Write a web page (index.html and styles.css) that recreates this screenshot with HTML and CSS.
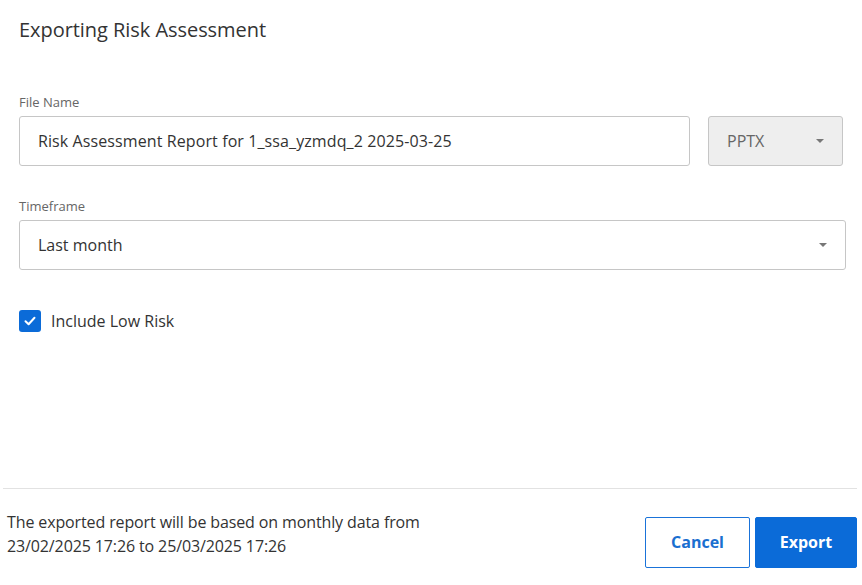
FILE: index.html
```html
<!DOCTYPE html>
<html>
<head>
<meta charset="utf-8">
<link rel="stylesheet" href="styles.css">
</head>
<body>
<div class="dialog">
  <h1 class="title">Exporting Risk Assessment</h1>
  <div class="content">
    <div class="field">
      <label class="label">File Name</label>
      <div class="row">
        <div class="input">Risk Assessment Report for 1_ssa_yzmdq_2 2025-03-25</div>
        <div class="select disabled"><span>PPTX</span><span class="caret"></span></div>
      </div>
    </div>
    <div class="field timeframe">
      <label class="label">Timeframe</label>
      <div class="select wide"><span>Last month</span><span class="caret"></span></div>
    </div>
    <div class="check">
      <span class="box"><svg width="14" height="14" viewBox="0 0 14 14"><path d="M2.5 7.2 L5.6 10.2 L11.5 3.8" fill="none" stroke="#fff" stroke-width="2" stroke-linecap="round" stroke-linejoin="round"/></svg></span>
      <span class="check-label">Include Low Risk</span>
    </div>
  </div>
  <div class="footer">
    <p class="note">The exported report will be based on monthly data from<br>23/02/2025 17:26 to 25/03/2025 17:26</p>
    <div class="actions">
      <button class="btn btn-secondary">Cancel</button>
      <button class="btn btn-primary">Export</button>
    </div>
  </div>
</div>
</body>
</html>
```

FILE: styles.css
```css
* { box-sizing: border-box; }
html, body {
  margin: 0;
  padding: 0;
  background: #fff;
}
body {
  font-family: "Open Sans", "Noto Sans", sans-serif;
  color: #333;
}
.dialog {
  width: 862px;
  height: 585px;
  display: flex;
  flex-direction: column;
}
.title {
  margin: 16px 0 0 19px;
  font-size: 20px;
  font-weight: 400;
  line-height: 27px;
  color: #333;
  letter-spacing: -0.05px;
}
.content {
  flex: 1;
  padding: 50px 16px 0 19px;
}
.field {
  display: flex;
  flex-direction: column;
}
.label {
  font-size: 13px;
  line-height: 18px;
  color: #666;
  margin-bottom: 5px;
}
.row {
  display: flex;
  gap: 18px;
}
.input {
  flex: 0 0 671px;
  height: 50px;
  border: 1px solid #c6c6c6;
  border-radius: 3px;
  padding: 0 18px;
  display: flex;
  align-items: center;
  font-size: 16px;
  color: #333;
  letter-spacing: 0.1px;
}
.select {
  height: 50px;
  border: 1px solid #c6c6c6;
  border-radius: 3px;
  padding: 0 18px;
  display: flex;
  align-items: center;
  justify-content: space-between;
  font-size: 16px;
  color: #333;
  background: #fff;
}
.select.disabled {
  width: 135px;
  background: #eeeeee;
  color: #666;
}
.caret {
  width: 0;
  height: 0;
  border-left: 4px solid transparent;
  border-right: 4px solid transparent;
  border-top: 4px solid #777;
}
.timeframe {
  margin-top: 31px;
}
.select.wide {
  width: 827px;
}
.check {
  margin-top: 39px;
  display: flex;
  align-items: center;
  gap: 10px;
}
.box {
  width: 22px;
  height: 22px;
  border-radius: 3px;
  background: #0b6bd8;
  display: flex;
  align-items: center;
  justify-content: center;
}
.check-label {
  font-size: 16px;
  color: #333;
  padding-top: 1px;
}
.footer {
  margin: 0 5px 0 3px;
  border-top: 1px solid #e2e2e2;
  display: flex;
  justify-content: space-between;
  align-items: flex-start;
  padding: 21px 0 17px 4px;
}
.note {
  margin: 0;
  font-size: 16px;
  line-height: 24px;
  color: #333;
  letter-spacing: -0.12px;
}
.actions {
  display: flex;
  gap: 5px;
  margin-top: 7px;
}
.btn {
  height: 51px;
  font-family: "Open Sans", "Noto Sans", sans-serif;
  font-size: 16px;
  font-weight: 700;
  border-radius: 2px;
  padding: 0 0 2px;
  cursor: pointer;
}
.btn-secondary {
  width: 105px;
  background: #fff;
  border: 1px solid #1a73d9;
  color: #1a6fd0;
}
.btn-primary {
  width: 102px;
  background: #0b6bd8;
  border: 1px solid #0b6bd8;
  color: #fff;
}
```
